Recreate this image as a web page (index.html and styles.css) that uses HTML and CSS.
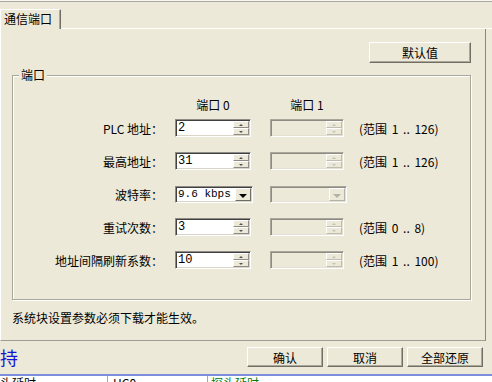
FILE: index.html
```html
<!DOCTYPE html>
<html lang="zh-CN">
<head>
  <meta charset="UTF-8">
  <title>系统块 - 通信端口</title>
  <link rel="stylesheet" href="styles.css">
</head>
<body>

  <div class="topline"></div>

  <div class="tabs">
    <div class="tab">通信端口</div>
    <div class="tab-rest"></div>
  </div>

  <div class="page">
    <div class="page-top">
      <button class="btn btn-default">默认值</button>
    </div>

    <div class="group">
      <div class="legend">端口</div>

      <div class="row head">
        <div class="label"></div>
        <div class="col0">端口 0</div>
        <div class="col1">端口 1</div>
      </div>

      <div class="row first">
        <div class="label">PLC 地址：</div>
        <div class="spin"><span class="val">2</span><span class="arrows"><i class="up"></i><i class="dn"></i></span></div>
        <div class="spin off"><span class="val"></span><span class="arrows"><i class="up"></i><i class="dn"></i></span></div>
        <div class="range">(范围 1 .. 126)</div>
      </div>

      <div class="row">
        <div class="label">最高地址：</div>
        <div class="spin"><span class="val">31</span><span class="arrows"><i class="up"></i><i class="dn"></i></span></div>
        <div class="spin off"><span class="val"></span><span class="arrows"><i class="up"></i><i class="dn"></i></span></div>
        <div class="range">(范围 1 .. 126)</div>
      </div>

      <div class="row">
        <div class="label">波特率：</div>
        <div class="combo"><span class="val">9.6 kbps</span><span class="drop"><i></i></span></div>
        <div class="combo off"><span class="val"></span><span class="drop"><i></i></span></div>
      </div>

      <div class="row">
        <div class="label">重试次数：</div>
        <div class="spin"><span class="val">3</span><span class="arrows"><i class="up"></i><i class="dn"></i></span></div>
        <div class="spin off"><span class="val"></span><span class="arrows"><i class="up"></i><i class="dn"></i></span></div>
        <div class="range">(范围 0 .. 8)</div>
      </div>

      <div class="row">
        <div class="label">地址间隔刷新系数：</div>
        <div class="spin"><span class="val">10</span><span class="arrows"><i class="up"></i><i class="dn"></i></span></div>
        <div class="spin off"><span class="val"></span><span class="arrows"><i class="up"></i><i class="dn"></i></span></div>
        <div class="range">(范围 1 .. 100)</div>
      </div>
    </div>

    <div class="note">系统块设置参数必须下载才能生效。</div>
  </div>

  <div class="footer">
    <div class="title">持</div>
    <div class="buttons">
      <button class="btn">确认</button>
      <button class="btn">取消</button>
      <button class="btn">全部还原</button>
    </div>
  </div>

  <div class="table-strip">
    <div class="cell c1">头延时</div>
    <div class="cell c2">HC0</div>
    <div class="cell c3">探头延时</div>
  </div>

</body>
</html>
```

FILE: styles.css
```css
* {
  box-sizing: border-box;
}
body {
  margin: 0;
  width: 492px;
  height: 382px;
  overflow: hidden;
  background-color: #ece9d8;
  font-family: "Noto Sans CJK SC", sans-serif;
  font-size: 12px;
  color: #000;
}

/* top edge + tab strip */
.topline {
  height: 2px;
  border-top: 1px solid #f7f6f0;
  border-bottom: 1px solid #a9a7a0;
}
.tabs {
  display: flex;
  margin-top: 7px;
  height: 20px;
}
.tab {
  width: 61px;
  height: 20px;
  padding-left: 3px;
  line-height: 18px;
  border-top: 1px solid #fff;
  border-left: 1px solid #fff;
  border-right: 1px solid #716f64;
  box-shadow: inset -1px 0 0 #aca899;
}
.tab-rest {
  flex: 1;
  border-bottom: 1px solid #fff;
}

/* tab page */
.page {
  width: 486px;
  height: 312px;
  border-left: 1px solid #fff;
  border-right: 1px solid #8a887e;
  border-bottom: 1px solid #9d9b92;
}
.page-top {
  display: flex;
  justify-content: flex-end;
  padding: 13px 14px 0 0;
}

.btn {
  height: 21px;
  padding: 0;
  font-family: "Noto Sans CJK SC", sans-serif;
  font-size: 12px;
  line-height: 17px;
  color: #000;
  background-color: #ece9d8;
  border: 1px solid;
  border-color: #fff #716f64 #716f64 #fff;
  box-shadow: inset -1px -1px 0 #aca899;
}
.btn-default {
  width: 102px;
}

/* group box */
.group {
  position: relative;
  margin: 12px 0 0 11px;
  width: 459px;
  height: 225px;
  padding-top: 19px;
  border: 1px solid #a9a799;
  box-shadow: inset 1px 1px 0 #fff, 1px 1px 0 #fff;
}
.legend {
  position: absolute;
  top: -8px;
  left: 6px;
  padding: 0 2px;
  line-height: 14px;
  background-color: #ece9d8;
}

.row {
  display: flex;
  align-items: center;
  height: 18px;
  margin-top: 15px;
}
.row.head {
  margin-top: 0;
}
.row.first {
  margin-top: 6px;
}
.label {
  width: 150px;
  text-align: right;
  white-space: nowrap;
}
.col0 {
  width: 76px;
  margin-left: 12px;
  text-align: center;
}
.col1 {
  width: 74px;
  margin-left: 19px;
  text-align: center;
}
.range {
  margin-left: 15px;
  white-space: nowrap;
  word-spacing: 2px;
}

/* spin edit */
.spin {
  display: flex;
  width: 76px;
  height: 18px;
  margin-left: 12px;
  background-color: #fff;
  border: 1px solid;
  border-color: #8e8c84 #fff #fff #8e8c84;
  box-shadow: inset 1px 1px 0 #404040, inset -1px -1px 0 #d8d5c8;
}
.spin.off {
  width: 74px;
  margin-left: 19px;
  background-color: #ece9d8;
  border-color: #a9a79c #fff #fff #a9a79c;
  box-shadow: inset 1px 1px 0 #8d8b82, inset -1px -1px 0 #e4e1d4;
}
.val {
  flex: 1;
  min-width: 0;
  padding: 1px 0 0 2px;
  font-family: "Liberation Mono", monospace;
  font-size: 12px;
  line-height: 14px;
  white-space: nowrap;
  overflow: hidden;
}
.arrows {
  display: flex;
  flex-direction: column;
  width: 16px;
  margin: 1px 1px 1px 0;
}
.arrows i {
  position: relative;
  flex: 1;
  background-color: #ece9d8;
  border: 1px solid;
  border-color: #fff #8e8c84 #8e8c84 #fff;
}
.arrows i::after {
  content: "";
  position: absolute;
  left: 5px;
  top: 2px;
  border-left: 2px solid transparent;
  border-right: 2px solid transparent;
}
.arrows .up::after {
  border-bottom: 2px solid #555;
}
.arrows .dn::after {
  border-top: 2px solid #555;
}
.spin.off .arrows i {
  border-color: #fff #c0bdb0 #c0bdb0 #fff;
}
.spin.off .arrows .up::after {
  border-bottom-color: #c4c1b4;
}
.spin.off .arrows .dn::after {
  border-top-color: #c4c1b4;
}

/* combo box */
.combo {
  display: flex;
  width: 78px;
  height: 17px;
  margin-left: 12px;
  background-color: #fff;
  border: 1px solid;
  border-color: #8e8c84 #fff #fff #8e8c84;
  box-shadow: inset 1px 1px 0 #404040, inset -1px -1px 0 #d8d5c8;
}
.combo.off {
  width: 77px;
  margin-left: 17px;
  background-color: #ece9d8;
  border-color: #a9a79c #fff #fff #a9a79c;
  box-shadow: inset 1px 1px 0 #8d8b82, inset -1px -1px 0 #e4e1d4;
}
.combo .val {
  padding-top: 0;
  font-size: 11px;
}
.drop {
  position: relative;
  width: 16px;
  margin: 1px 1px 1px 0;
  background-color: #ece9d8;
  border: 1px solid;
  border-color: #fff #716f64 #716f64 #fff;
}
.drop i {
  position: absolute;
  left: 3px;
  top: 5px;
  border-left: 4px solid transparent;
  border-right: 4px solid transparent;
  border-top: 4px solid #000;
}
.combo.off .drop {
  border-color: #fff #b5b2a6 #b5b2a6 #fff;
}
.combo.off .drop i {
  border-top-color: #b5b2a6;
}

.note {
  margin: 11px 0 0 11px;
  line-height: 14px;
}

/* dialog footer */
.footer {
  display: flex;
  align-items: flex-start;
  height: 33px;
}
.title {
  margin: 6px 0 0 0;
  font-size: 18px;
  line-height: 20px;
  color: #1515d8;
}
.buttons {
  display: flex;
  gap: 4px;
  margin: 6px 0 0 auto;
  padding-right: 9px;
}
.buttons .btn {
  width: 76px;
  height: 20px;
}

/* list below the dialog */
.table-strip {
  display: flex;
  height: 9px;
  overflow: hidden;
  background-color: #fff;
  border-top: 2px solid #7d8fdc;
}
.cell {
  line-height: 16px;
  margin-top: -1px;
  white-space: nowrap;
  border-right: 1px solid #aca899;
}
.c1 {
  width: 108px;
}
.c2 {
  width: 100px;
  padding-left: 5px;
}
.c3 {
  flex: 1;
  padding-left: 3px;
  color: #007800;
  border-right: 0;
}
```
